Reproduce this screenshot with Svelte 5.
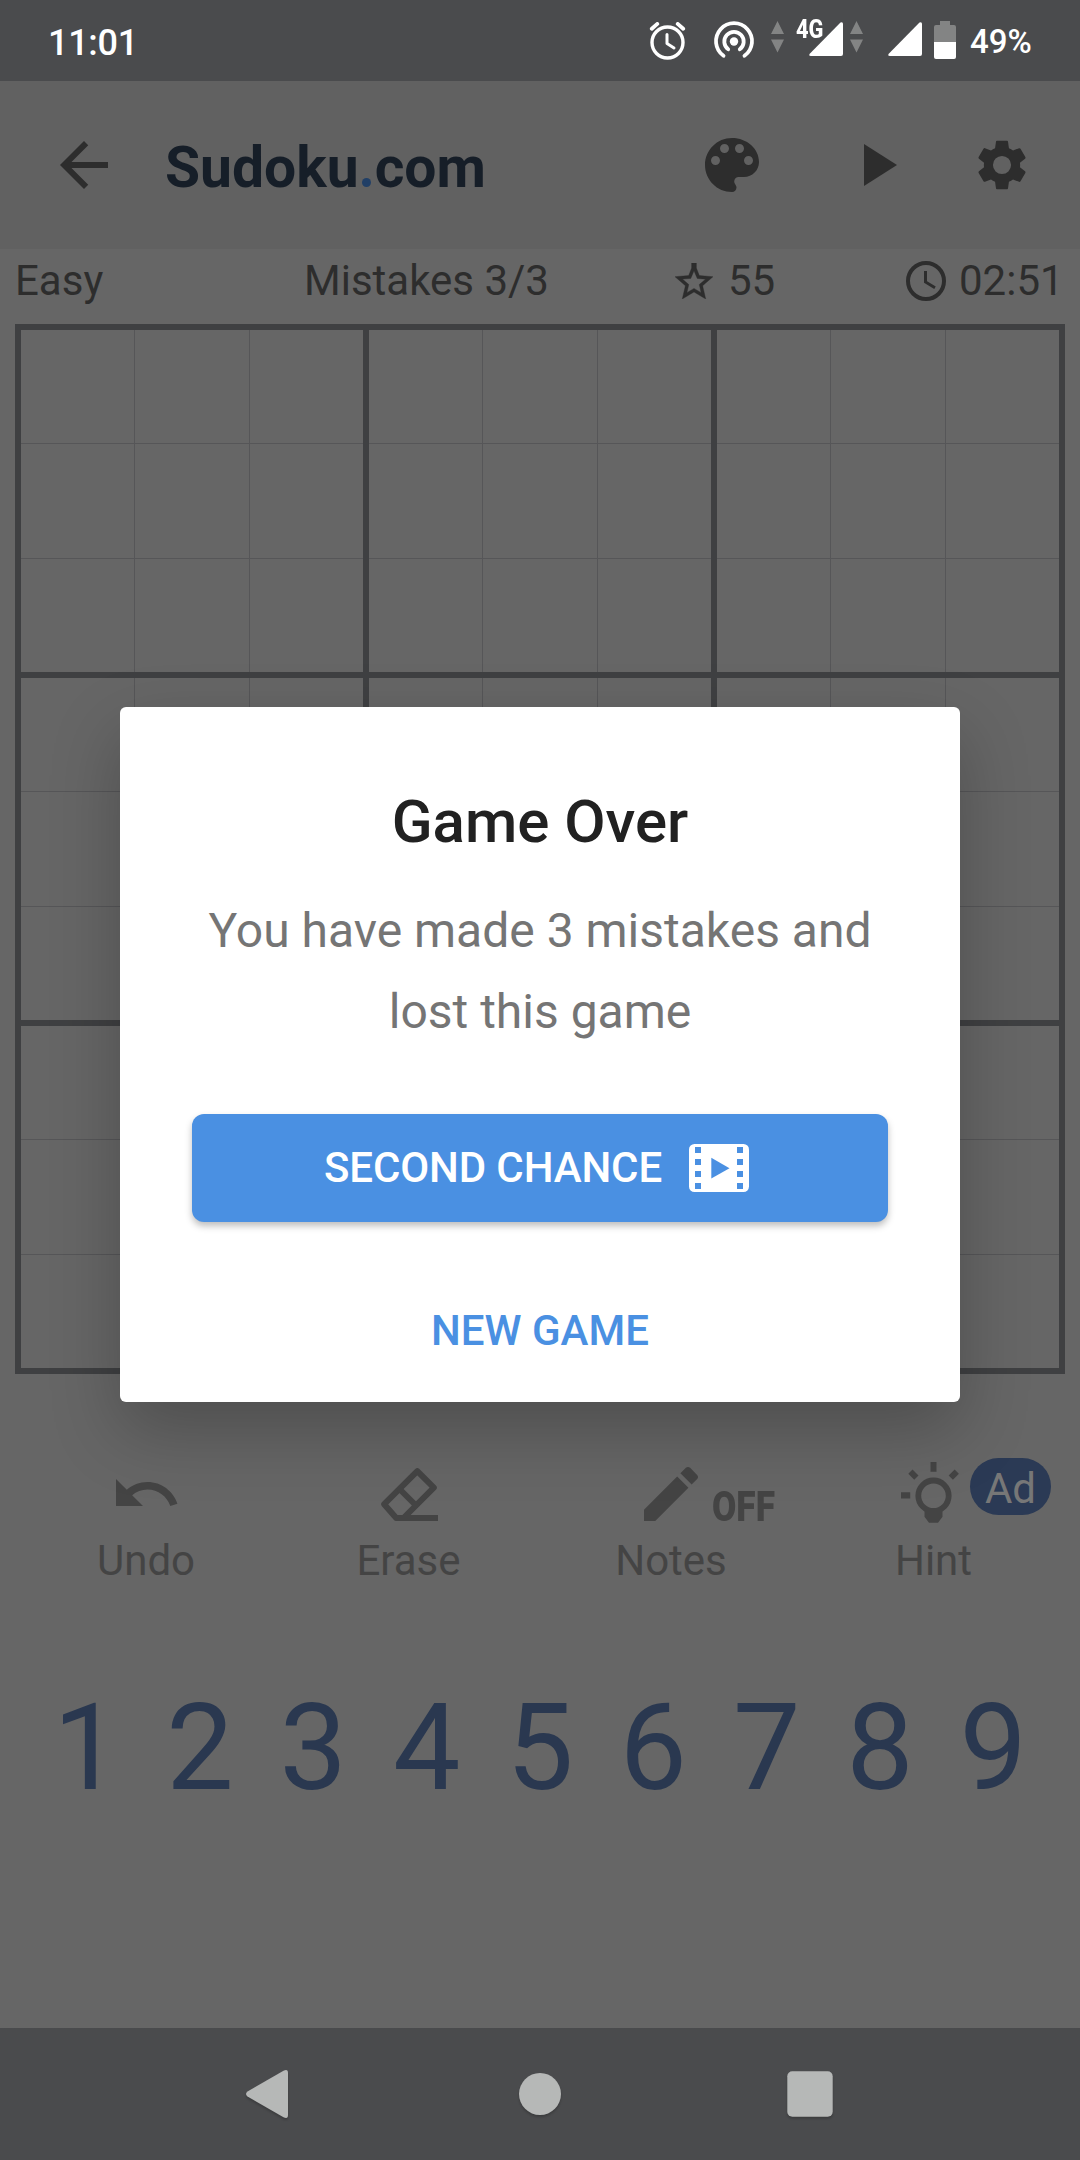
<script>
  const boxes = Array.from({ length: 9 }, (_, i) => i);
  const cells = Array.from({ length: 9 }, (_, i) => i);
  const digits = [1, 2, 3, 4, 5, 6, 7, 8, 9];
  const holeRows = [3, 15, 27, 39];
</script>

{#snippet dataArrows()}
  <svg class="arrows" width="13" height="32" viewBox="0 0 13 32">
    <path d="M6.500 0L13 13H0zM0 18.500H13L6.500 31.500z" />
  </svg>
{/snippet}

<div class="screen">
  <header class="status">
    <span class="time">11:01</span>
    <svg class="alarm" width="38" height="38" viewBox="0 0 38 38" fill="none" stroke="#fff" stroke-linecap="round">
      <circle cx="18.500" cy="20.500" r="15.500" stroke-width="3.400" />
      <path d="M18 12.500V21.500l7 4.500" stroke-width="3" stroke-linejoin="round" />
      <path d="M2.800 6.700L8.300 1.900M34.200 6.700L28.700 1.900" stroke-width="3.800" />
    </svg>
    <svg class="hotspot" width="42" height="38" viewBox="0 0 42 38" fill="none" stroke="#fff" stroke-width="3.800" stroke-linecap="round">
      <circle cx="21" cy="20.500" r="4.200" fill="#fff" stroke="none" />
      <path d="M15.200 28.300A9.700 9.700 0 1 1 26.800 28.300" />
      <path d="M10.500 34.800A18 18 0 1 1 31.500 34.800" />
    </svg>
    {@render dataArrows()}
    <div class="cell4g">
      <span>4G</span>
      <svg width="34" height="34" viewBox="0 0 34 34"><path d="M31.500.5Q34-.5 34 2V32Q34 34 32 34H2Q-1 34 1 31.500z" fill="#fff" /></svg>
    </div>
    {@render dataArrows()}
    <svg class="signal" width="34" height="34" viewBox="0 0 34 34"><path d="M31.500.5Q34-.5 34 2V32Q34 34 32 34H2Q-1 34 1 31.500z" fill="#fff" /></svg>
    <svg class="battery" width="22" height="38" viewBox="0 0 22 38">
      <path d="M6 0H16V4H20Q22 4 22 6V21H0V6Q0 4 2 4H6z" fill="#838484" />
      <path d="M0 21H22V36Q22 38 20 38H2Q0 38 0 36z" fill="#fff" />
    </svg>
    <span class="percent">49%</span>
  </header>

  <nav class="toolbar">
    <svg width="72" height="72" viewBox="0 0 24 24"><path d="M20 11H7.830l5.590-5.590L12 4l-8 8 8 8 1.410-1.410L7.830 13H20v-2z" /></svg>
    <h1>Sudoku<i></i>com</h1>
    <svg class="palette" width="72" height="72" viewBox="0 0 24 24"><path d="M12 3c-4.970 0-9 4.030-9 9s4.030 9 9 9c.83 0 1.500-.67 1.500-1.500 0-.39-.15-.74-.39-1.010-.23-.26-.38-.61-.38-.99 0-.83.67-1.500 1.500-1.500H16c2.760 0 5-2.240 5-5 0-4.420-4.030-8-9-8zm-5.500 9c-.83 0-1.500-.67-1.500-1.500S5.670 9 6.500 9 8 9.670 8 10.500 7.330 12 6.500 12zm3-4C8.670 8 8 7.330 8 6.500S8.670 5 9.500 5s1.500.67 1.500 1.500S10.330 8 9.500 8zm5 0c-.83 0-1.500-.67-1.500-1.500S13.670 5 14.500 5s1.500.67 1.500 1.500S15.330 8 14.500 8zm3 4c-.83 0-1.500-.67-1.500-1.500S16.670 9 17.500 9s1.500.67 1.500 1.500-.67 1.500-1.500 1.500z" /></svg>
    <svg class="play" width="72" height="72" viewBox="0 0 24 24"><path d="M8 5v14l11-7z" /></svg>
    <svg class="gear" width="58" height="58" viewBox="0 0 24 24"><path fill-rule="evenodd" d="M19.430 12.980c.04-.32.07-.64.07-.98s-.03-.66-.07-.98l2.110-1.650c.19-.15.24-.42.12-.64l-2-3.460c-.12-.22-.39-.3-.61-.22l-2.490 1c-.52-.4-1.080-.73-1.690-.98l-.38-2.650C14.460 2.180 14.250 2 14 2h-4c-.25 0-.46.18-.49.42l-.38 2.650c-.61.25-1.170.59-1.690.98l-2.490-1c-.23-.09-.49 0-.61.22l-2 3.460c-.13.22-.07.49.12.64l2.110 1.650c-.04.32-.07.65-.07.98s.03.66.07.98l-2.110 1.650c-.19.15-.24.42-.12.64l2 3.460c.12.22.39.3.61.22l2.490-1c.52.4 1.080.73 1.690.98l.38 2.650c.03.24.24.42.49.42h4c.25 0 .46-.18.49-.42l.38-2.650c.61-.25 1.170-.59 1.690-.98l2.490 1c.23.09.49 0 .61-.22l2-3.460c.12-.22.07-.49-.12-.64l-2.110-1.650zM12 8.250a3.750 3.750 0 1 0 0 7.500a3.750 3.750 0 1 0 0-7.500z" /></svg>
  </nav>

  <section class="info">
    <span class="level">Easy</span>
    <span class="mistakes">Mistakes 3/3</span>
    <span class="score">
      <svg width="38" height="36" viewBox="2 2 20 19"><path stroke="#2d2d2d" stroke-width=".2" d="M22 9.240l-7.190-.62L13.250 4.700V2h-2.500v2.700L9.190 8.630 2 9.240l5.460 4.730L5.820 21 12 17.270 18.180 21l-1.630-7.030L22 9.240zM12 15.400l-3.760 2.270 1-4.280-3.320-2.880 4.380-.38L12 6.100l1.710 4.040 4.380.38-3.320 2.880 1 4.280L12 15.400z" /></svg>
      55
    </span>
    <span class="clock">
      <svg width="40" height="40" viewBox="0 0 40 40" fill="none" stroke="#2d2d2d"><circle cx="20" cy="20" r="18" stroke-width="4" /><path d="M19.500 10V21L29 26.700" stroke-width="3" /></svg>
      02:51
    </span>
  </section>

  <main class="board">
    {#each boxes as box (box)}
      <div class="box">
        {#each cells as cell (cell)}<div class="cell"></div>{/each}
      </div>
    {/each}
  </main>

  <section class="tools">
    <div class="tool">
      <svg width="72" height="72" viewBox="0 0 24 24"><path d="M12.500 8c-2.650 0-5.050.99-6.900 2.600L2 7v9h9l-3.620-3.620c1.390-1.160 3.160-1.880 5.120-1.880 3.540 0 6.550 2.310 7.600 5.500l2.370-.78C21.080 11.030 17.150 8 12.500 8z" /></svg>
      <span>Undo</span>
    </div>
    <div class="tool">
      <svg width="72" height="72" viewBox="0 0 72 72">
        <g transform="translate(7 9)" fill="none" stroke="#444" stroke-width="6">
          <path d="M58 51H16.200L4.200 37.200L37.300 4.200L53.800 20.700L23.500 51" stroke-linejoin="round" />
          <path d="M19.500 22L37.500 40" />
        </g>
      </svg>
      <span>Erase</span>
    </div>
    <div class="tool">
      <svg width="72" height="72" viewBox="0 0 24 24"><path d="M3 17.250V21h3.750L17.810 9.940l-3.750-3.750L3 17.250zM20.710 7.040c.39-.39.39-1.020 0-1.410l-2.340-2.340c-.39-.39-1.020-.39-1.410 0l-1.830 1.830 3.750 3.750 1.830-1.830z" /></svg>
      <span>Notes</span>
      <b class="off">OFF</b>
    </div>
    <div class="tool">
      <svg width="72" height="72" viewBox="0.500 0 72 72">
        <circle cx="36" cy="37.700" r="15.200" fill="none" stroke="#444" stroke-width="5.800" />
        <path d="M33 4h6v9.700h-6zM3.500 34.300h9.200v6.300H3.500zM27 50H45V58.700L40.500 64.700H31.500L27 58.700z" />
        <path d="M-3-4.200H3V4.200H-3z" transform="translate(15.900 16.700) rotate(-45)" />
        <path d="M-3-4.200H3V4.200H-3z" transform="translate(56.300 16.700) rotate(45)" />
      </svg>
      <span>Hint</span>
      <em class="ad">Ad</em>
    </div>
  </section>

  <section class="digits">
    {#each digits as digit (digit)}<span>{digit}</span>{/each}
  </section>

  <footer class="navbar">
    <svg width="44" height="48" viewBox="0 0 44 48"><path d="M38.500.8Q43-1.500 43 3V45Q43 49.500 38.500 47.200L2.500 26.500Q-.5 24 2.500 21.500z" /></svg>
    <svg class="home" width="44" height="48" viewBox="0 0 44 48"><circle cx="22" cy="24" r="21" /></svg>
    <svg width="46" height="48" viewBox="0 0 46 48"><rect x=".3" y="1.200" width="45.400" height="45.600" rx="5" /></svg>
  </footer>

  <div class="overlay">
    <div class="dialog" role="dialog">
      <h2>Game Over</h2>
      <p>You have made 3 mistakes and<br />lost this game</p>
      <button class="primary">
        SECOND CHANCE
        <svg width="60" height="48" viewBox="0 0 60 48">
          <rect width="60" height="48" rx="5.500" fill="#fff" />
          {#each holeRows as y (y)}
            <rect x="6" {y} width="6" height="6" fill="#4a90e2" />
            <rect x="48" {y} width="6" height="6" fill="#4a90e2" />
          {/each}
          <path d="M22.300 13.800L40.500 24.200L22.300 34.600z" fill="#4a90e2" />
        </svg>
      </button>
      <button class="flat">NEW GAME</button>
    </div>
  </div>
</div>

<style>
  :global(body) {
    background: #666;
  }
  .screen {
    position: relative;
    width: 1080px;
    height: 2160px;
    display: flex;
    flex-direction: column;
    overflow: hidden;
    background: #666;
    color: #2d2d2d;
    fill: #2d2d2d;
    font-family: Roboto, sans-serif;
    font-size: 42px;
  }
  svg {
    display: block;
    flex: none;
  }
  .status {
    height: 81px;
    flex: none;
    display: flex;
    align-items: flex-start;
    background: #4a4b4d;
    color: #fff;
    font-weight: 500;
  }
  .time {
    width: 601px;
    padding: 0 0 0 48px;
    box-sizing: border-box;
    font-size: 36px;
    line-height: 86px;
    letter-spacing: -0.3px;
    margin-right: 48px;
  }
  .alarm {
    margin-top: 22px;
  }
  .hotspot {
    margin: 21px 16px 0 26px;
  }
  .arrows {
    margin-top: 21px;
    fill: #838484;
  }
  .cell4g {
    position: relative;
    width: 47px;
    margin: 22px 7px 0 12px;
    display: flex;
    justify-content: flex-end;
  }
  .cell4g span {
    position: absolute;
    left: -0.5px;
    top: -8px;
    font-size: 26px;
    line-height: 30px;
    font-weight: 800;
    transform: scaleX(0.84);
    transform-origin: left;
  }
  .signal {
    margin: 22px 12px 0 25px;
  }
  .battery {
    margin-top: 21px;
  }
  .percent {
    margin-left: 14px;
    font-size: 33px;
    line-height: 84px;
  }
  .toolbar {
    height: 168px;
    flex: none;
    display: flex;
    align-items: center;
    padding-left: 48px;
    background: #616161;
  }
  h1 {
    margin: 5px 0 0 45px;
    width: 531px;
    display: flex;
    align-items: baseline;
    font-size: 57px;
    line-height: 70px;
    font-weight: 700;
    color: #161e28;
  }
  h1 i {
    width: 9px;
    height: 9px;
    margin: 0 4px 0 3px;
    border-radius: 50%;
    background: #213f66;
  }
  .play {
    margin: 0 61px 0 72px;
  }
  .info {
    height: 63px;
    margin-bottom: 12px;
    flex: none;
    display: flex;
    align-items: center;
    line-height: 63px;
  }
  .level {
    width: 288px;
    padding-left: 15px;
    box-sizing: border-box;
  }
  .mistakes {
    width: 387px;
    padding-left: 16px;
    box-sizing: border-box;
  }
  .score {
    width: 231px;
    display: flex;
    align-items: center;
    gap: 15px;
  }
  .clock {
    display: flex;
    align-items: center;
    gap: 13px;
  }
  .board {
    width: 1050px;
    height: 1050px;
    box-sizing: border-box;
    margin: 0 15px;
    flex: none;
    display: grid;
    grid-template-columns: repeat(3, 342px);
    grid-template-rows: repeat(3, 342px);
    gap: 6px;
    border: 6px solid #3f4042;
    background: #3f4042;
  }
  .box {
    display: grid;
    grid-template-columns: 113px 114px 113px;
    grid-template-rows: 113px 114px 113px;
    gap: 1px;
    background: #565658;
  }
  .cell {
    background: #666;
  }
  .tools {
    margin: 84px 15px 0;
    flex: none;
    display: grid;
    grid-template-columns: 262px 263px 262px 263px;
    color: #444;
    fill: #444;
  }
  .tool {
    position: relative;
    display: flex;
    flex-direction: column;
    align-items: center;
  }
  .tool span {
    margin-top: 6px;
    line-height: 50px;
  }
  .off {
    position: absolute;
    left: 171.5px;
    top: 24px;
    line-height: 50px;
    font-weight: 900;
    transform: scaleX(0.84);
    transform-origin: left;
  }
  .ad {
    position: absolute;
    left: 168px;
    top: 0;
    width: 81px;
    height: 57px;
    border-radius: 29px;
    background: #2b3a55;
    color: #777;
    font-style: normal;
    line-height: 61px;
    text-align: center;
  }
  .digits {
    margin: 92px 30px 0;
    flex: none;
    display: grid;
    grid-template-columns: repeat(9, 1fr);
    text-align: center;
    font-size: 120px;
    line-height: 140px;
    color: #2a3850;
  }
  .navbar {
    height: 132px;
    margin-top: auto;
    flex: none;
    display: flex;
    align-items: center;
    justify-content: space-between;
    padding: 0 247px 0 245px;
    background: #4a4b4d;
    fill: #b6b8b7;
  }
  .navbar svg {
    filter: drop-shadow(0 2px 1px rgba(0, 0, 0, 0.2));
  }
  .navbar .home {
    margin-left: 4px;
  }
  .overlay {
    position: absolute;
    inset: 81px 0 132px;
    display: flex;
    align-items: center;
    justify-content: center;
  }
  .dialog {
    width: 840px;
    height: 695px;
    box-sizing: border-box;
    padding: 79px 72px 0;
    display: flex;
    flex-direction: column;
    border-radius: 6px;
    background: #fff;
    text-align: center;
    box-shadow: 0 28px 70px rgba(0, 0, 0, 0.24);
  }
  h2 {
    margin: 0;
    font-size: 60px;
    line-height: 72px;
    font-weight: 500;
    color: #212121;
  }
  p {
    margin: 32px -30px 62px;
    font-size: 48px;
    line-height: 81px;
    color: #757575;
  }
  button {
    border: 0;
    padding: 0;
    font: 500 42px/60px Roboto, sans-serif;
  }
  .primary {
    height: 108px;
    flex: none;
    display: flex;
    align-items: center;
    justify-content: center;
    gap: 27px;
    padding-right: 7px;
    border-radius: 12px;
    background: #4a90e2;
    color: #fff;
    letter-spacing: -0.12px;
    box-shadow: 0 4px 7px rgba(0, 0, 0, 0.26);
  }
  .flat {
    margin-top: 79px;
    background: none;
    color: #4a90e2;
  }
</style>
